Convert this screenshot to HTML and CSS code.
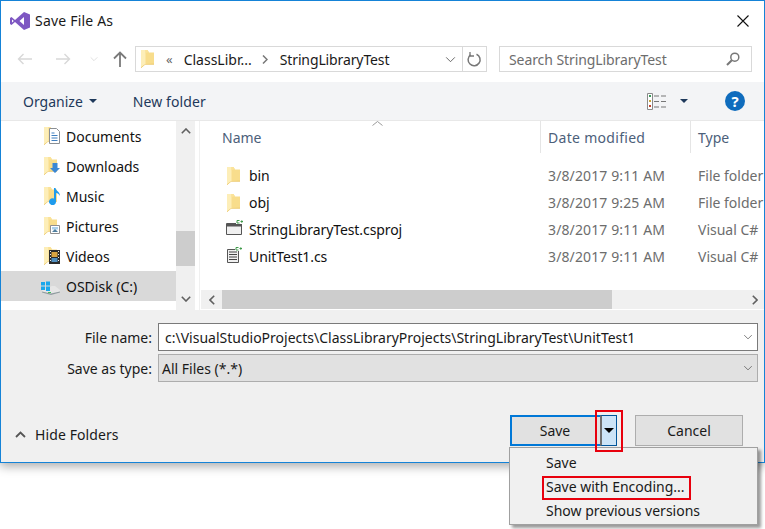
FILE: index.html
```html
<!DOCTYPE html>
<html lang="en">
<head>
    <meta charset="UTF-8">
    <title>Save File As</title>
    <link rel="stylesheet" href="styles.css">
</head>
<body>
    <svg class="defs" width="0" height="0">
        <symbol id="folder" viewBox="0 0 13 18">
            <path d="M0 0h6.500L8 2.500h5V14.500H4L0 18z" fill="#f8dd8c"/>
            <path d="M0 0h4.500v14L0 18z" fill="#fdeeb8"/>
            <path d="M4.500 0h2L8 2.500H6l-1.500 1z" fill="#fbe39a"/>
            <path d="M4.500 14 13 13.700v.8H4.300L0 18v-.8z" fill="#e8c062"/>
        </symbol>
        <symbol id="chev-down" viewBox="0 0 12 8">
            <path d="M1 1.500 6 6.500 11 1.500" fill="none" stroke="currentColor" stroke-width="1"/>
        </symbol>
        <symbol id="cs-badge" viewBox="0 0 7 4">
            <path d="M0 0h7v4H0z" fill="#fff"/>
            <path d="M3.500 .5H1v2.500h2.500M4.500 1.500h2.500M5.800 .3v2.500" fill="none" stroke="#3f9a4a"/>
        </symbol>
    </svg>

    <div class="dialog">
        <div class="titlebar">
            <svg class="vs-logo" width="20" height="18" viewBox="0 0 20 18">
                <path d="M14 0 20 2.500V15.500L14 18 5 10 1.500 13 0 12V6L1.500 5 5 8zM14 5 9.500 9 14 13zM2 7.500V10.500L3.800 9z" fill="#7e57c2"/>
            </svg>
            <span class="title">Save File As</span>
            <svg class="close" width="12" height="12" viewBox="0 0 12 12">
                <path d="M.5.500 11.500 11.500M11.500.500.500 11.500" stroke="#111" stroke-width="1.100"/>
            </svg>
        </div>

        <div class="navbar">
            <svg class="nav-back" width="15" height="12" viewBox="0 0 15 12">
                <path d="M15 6H1.500M6.500 1 1.500 6l5 5" fill="none" stroke="#d8d8d8" stroke-width="1.400"/>
            </svg>
            <svg class="nav-forward" width="15" height="12" viewBox="0 0 15 12">
                <path d="M0 6h13.500M8.500 1l5 5-5 5" fill="none" stroke="#d8d8d8" stroke-width="1.400"/>
            </svg>
            <svg class="nav-recent" width="8" height="6" viewBox="0 0 12 8" color="#d0d0d0"><use href="#chev-down"/></svg>
            <svg class="nav-up" width="14" height="16" viewBox="0 0 14 16">
                <path d="M7 16V2M1 7.500 7 1.500l6 6" fill="none" stroke="#7a7a7a" stroke-width="1.800"/>
            </svg>
            <div class="address">
                <svg class="address-folder" width="13" height="18"><use href="#folder"/></svg>
                <span class="crumb-more">«</span>
                <span class="crumb">ClassLibr...</span>
                <svg class="crumb-sep" width="6" height="9" viewBox="0 0 6 9">
                    <path d="M1 .500 5 4.500 1 8.500" fill="none" stroke="#777" stroke-width="1.500"/>
                </svg>
                <span class="crumb crumb-last">StringLibraryTest</span>
                <svg class="address-drop" width="11" height="7" viewBox="0 0 12 8" color="#555"><use href="#chev-down"/></svg>
                <div class="address-refresh">
                    <svg width="15" height="15" viewBox="0 0 15 15">
                        <path d="M9.500 2.200A6 6 0 1 1 3.500 2.900" fill="none" stroke="#777" stroke-width="1.500"/>
                        <path d="M3 0V4H7" fill="none" stroke="#777" stroke-width="1.300"/>
                    </svg>
                </div>
            </div>
            <div class="search">
                <span>Search StringLibraryTest</span>
                <svg width="14" height="14" viewBox="0 0 14 14">
                    <circle cx="8.800" cy="5.200" r="4" fill="none" stroke="#777" stroke-width="1.500"/>
                    <path d="M5.800 8.200 1 13" stroke="#777" stroke-width="2"/>
                </svg>
            </div>
        </div>

        <div class="toolbar">
            <span class="tool">Organize</span>
            <span class="caret"></span>
            <span class="tool tool-new">New folder</span>
            <svg class="view-icon" width="19" height="17" viewBox="0 0 19 17">
                <path d="M.5.500h5v16h-5z" fill="#fff" stroke="#8a8a8a"/>
                <path d="M2 2h2v2H2z" fill="#3a9a5a"/>
                <path d="M2 7h2v2H2z" fill="#c9a53a"/>
                <path d="M2 12h2v2H2z" fill="#c0402a"/>
                <path d="M7 3h5M14 3h5M7 8.500h5M14 8.500h5M7 14h5M14 14h5" stroke="#777"/>
            </svg>
            <span class="caret caret-view"></span>
            <div class="help">?</div>
        </div>

        <div class="browser">
            <div class="tree">
                <ul class="tree-list">
                    <li class="tree-item">
                        <svg width="16" height="18" viewBox="0 0 16 18">
                            <use href="#folder" width="13" height="18"/>
                            <path d="M5.500 1.500h7l3 3v12h-10z" fill="#fff" stroke="#8a8f94"/>
                            <path d="M7.500 6h3M7.500 8.500h6M7.500 11h6M7.500 13.500h6" stroke="#3f7fbf"/>
                        </svg>
                        <span>Documents</span>
                    </li>
                    <li class="tree-item">
                        <svg width="16" height="18" viewBox="0 0 16 18">
                            <use href="#folder" width="13" height="18"/>
                            <path d="M8.500 6h5v5H16l-5 5-5-5h2.500z" fill="#3a87d4"/>
                        </svg>
                        <span>Downloads</span>
                    </li>
                    <li class="tree-item">
                        <svg width="16" height="18" viewBox="0 0 16 18">
                            <use href="#folder" width="13" height="18"/>
                            <path d="M10 1h1.500c.5 3 4.500 3.500 4.500 8-1-2-2.500-3-4-3v8.500a3.500 3.500 0 1 1-2-3z" fill="#1f9bec"/>
                        </svg>
                        <span>Music</span>
                    </li>
                    <li class="tree-item">
                        <svg width="16" height="18" viewBox="0 0 16 18">
                            <use href="#folder" width="13" height="18"/>
                            <path d="M6.500 8.500h9v8h-9z" fill="#fff" stroke="#8f8f8f"/>
                            <path d="M8 10h6v2.500H8z" fill="#a9d0ea"/>
                            <path d="M8 15l3-3 3 3z" fill="#4f7f9f"/>
                        </svg>
                        <span>Pictures</span>
                    </li>
                    <li class="tree-item">
                        <svg width="16" height="18" viewBox="0 0 16 18">
                            <use href="#folder" width="13" height="18"/>
                            <path d="M5 3h11v14H5z" fill="#2b2b2b"/>
                            <path d="M7.500 5h6v5h-6z" fill="#d9a441"/>
                            <path d="M7.500 11h6v4h-6z" fill="#4f8fc0"/>
                            <path d="M6 4h1v1H6zM6 7h1v1H6zM6 10h1v1H6zM6 13h1v1H6zM14 4h1v1h-1zM14 7h1v1h-1zM14 10h1v1h-1zM14 13h1v1h-1z" fill="#eee"/>
                        </svg>
                        <span>Videos</span>
                    </li>
                    <li class="tree-item tree-drive">
                        <svg width="20" height="18" viewBox="0 0 20 18">
                            <path d="M1 13 11 9h3l5 4v2l-9 3-9-3z" fill="#e6e6e6"/>
                            <path d="M1 14.500l9 2 9-2V15.500L10 18l-9-2.500z" fill="#8f9b9f"/>
                            <path d="M7 15h3v1H7z" fill="#3ec05a"/>
                            <path d="M0 5h4v3.500H0zM5 4.500h4v4H5zM0 9.500h4V13H0zM5 9.500h4V14H5z" fill="#1aa7ec"/>
                        </svg>
                        <span>OSDisk (C:)</span>
                    </li>
                </ul>
                <div class="vscroll">
                    <svg class="arrow-up" width="10" height="6" viewBox="0 0 10 6"><path d="M.8 5.200 5 1l4.200 4.200" fill="none" stroke="#606060" stroke-width="1.600"/></svg>
                    <div class="vthumb"></div>
                    <svg class="arrow-down" width="10" height="6" viewBox="0 0 10 6"><path d="M.8.800 5 5l4.200-4.200" fill="none" stroke="#606060" stroke-width="1.600"/></svg>
                </div>
            </div>

            <div class="files">
                <div class="file-scroll">
                    <div class="file-head">
                        <div class="col col-name">Name
                            <svg class="sort" width="11" height="5" viewBox="0 0 11 5"><path d="M.5 4.500 5.500.5l5 4" fill="none" stroke="#9a9a9a"/></svg>
                        </div>
                        <div class="col col-date">Date modified</div>
                        <div class="col col-type">Type</div>
                    </div>
                    <div class="file-row">
                        <div class="file-name">
                            <div class="file-slot"><svg class="icon-folder" width="13" height="18"><use href="#folder"/></svg></div>
                            <span>bin</span>
                        </div>
                        <div class="file-date">3/8/2017 9:11 AM</div>
                        <div class="file-type">File folder</div>
                    </div>
                    <div class="file-row">
                        <div class="file-name">
                            <div class="file-slot"><svg class="icon-folder" width="13" height="18"><use href="#folder"/></svg></div>
                            <span>obj</span>
                        </div>
                        <div class="file-date">3/8/2017 9:25 AM</div>
                        <div class="file-type">File folder</div>
                    </div>
                    <div class="file-row">
                        <div class="file-name">
                            <div class="file-slot">
                                <svg class="icon-file" width="17" height="16" viewBox="0 0 17 16">
                                    <path d="M.5 3.500h15v11H.5z" fill="#f0f0f0" stroke="#555"/>
                                    <path d="M1 4h14v2.500H1z" fill="#555"/>
                                    <use href="#cs-badge" x="10" y="0" width="7" height="4"/>
                                </svg>
                            </div>
                            <span>StringLibraryTest.csproj</span>
                        </div>
                        <div class="file-date">3/8/2017 9:11 AM</div>
                        <div class="file-type">Visual C#</div>
                    </div>
                    <div class="file-row">
                        <div class="file-name">
                            <div class="file-slot">
                                <svg class="icon-file" width="17" height="16" viewBox="0 0 17 16">
                                    <path d="M1.500 2.500h11v13h-11z" fill="#f0f0f0" stroke="#555"/>
                                    <path d="M3 5h8M3 7.500h8M3 10h8M3 12.500h8" stroke="#444" stroke-width="1.200"/>
                                    <use href="#cs-badge" x="9" y="0" width="7" height="4"/>
                                </svg>
                            </div>
                            <span>UnitTest1.cs</span>
                        </div>
                        <div class="file-date">3/8/2017 9:11 AM</div>
                        <div class="file-type">Visual C#</div>
                    </div>
                </div>
                <div class="hscroll">
                    <div class="hbutton">
                        <svg width="6" height="10" viewBox="0 0 6 10"><path d="M5.200.8 1 5l4.200 4.200" fill="none" stroke="#606060" stroke-width="1.600"/></svg>
                    </div>
                    <div class="hthumb"></div>
                    <svg class="hright" width="6" height="10" viewBox="0 0 6 10"><path d="M.8.8 5 5 .8 9.200" fill="none" stroke="#606060" stroke-width="1.600"/></svg>
                </div>
            </div>
        </div>

        <div class="footer">
            <div class="field">
                <label class="field-label">File name:</label>
                <div class="field-box field-input">
                    <span>c:\VisualStudioProjects\ClassLibraryProjects\StringLibraryTest\UnitTest1</span>
                    <svg width="10" height="6" viewBox="0 0 12 8" color="#555"><use href="#chev-down"/></svg>
                </div>
            </div>
            <div class="field field-type">
                <label class="field-label">Save as type:</label>
                <div class="field-box field-select">
                    <span>All Files (*.*)</span>
                    <svg width="10" height="6" viewBox="0 0 12 8" color="#555"><use href="#chev-down"/></svg>
                </div>
            </div>
            <div class="actions">
                <div class="hide-folders">
                    <svg width="11" height="7" viewBox="0 0 11 7"><path d="M1 6 5.500 1.500 10 6" fill="none" stroke="#555" stroke-width="1.800"/></svg>
                    <span>Hide Folders</span>
                </div>
                <div class="btn-save">
                    <div class="btn-save-main">Save</div>
                    <div class="btn-save-drop"><span class="drop-arrow"></span></div>
                </div>
                <div class="btn-cancel">Cancel</div>
            </div>
        </div>
    </div>

    <!-- popup menu and the red callouts lie over the dialog -->
    <div class="menu">
        <div class="menu-item">Save</div>
        <div class="menu-item">Save with Encoding...</div>
        <div class="menu-item">Show previous versions</div>
    </div>
    <div class="callout callout-arrow"></div>
    <div class="callout callout-item"></div>
</body>
</html>
```

FILE: styles.css
```css
* {
    box-sizing: border-box;
}
html, body {
    margin: 0;
    padding: 0;
}
body {
    position: relative;
    width: 765px;
    height: 529px;
    overflow: hidden;
    background-color: #fff;
    font-family: 'Noto Sans', sans-serif;
    font-size: 14px;
    color: #1a1a1a;
}
.defs {
    position: absolute;
}
.dialog {
    height: 463px;
    border: 1px solid #1583d7;
    background-color: #fff;
    box-shadow: 0 3px 10px rgba(0,0,0,0.35);
    display: flex;
    flex-direction: column;
}

/* title bar */
.titlebar {
    height: 39px;
    flex: none;
    display: flex;
    align-items: center;
    padding: 0 15px 0 9px;
}
.title {
    margin-left: 5px;
    letter-spacing: 0.2px;
}
.close {
    margin-left: auto;
}

/* back / forward / address / search */
.navbar {
    height: 42px;
    flex: none;
    display: flex;
    padding: 6px 12px 10px 16px;
    align-items: center;
}
.nav-forward {
    margin-left: 24px;
}
.nav-recent {
    margin-left: 19px;
}
.nav-up {
    margin-left: 15px;
}
.address {
    width: 352px;
    height: 26px;
    margin-left: 8px;
    border: 1px solid #d9d9d9;
    display: flex;
    align-items: center;
    padding-left: 5px;
}
.crumb-more {
    margin-left: 12px;
    color: #666;
    font-size: 13px;
    line-height: 1;
}
.crumb {
    margin-left: 11px;
}
.crumb-sep {
    margin-left: 10px;
    margin-right: 2px;
}
.crumb-last {
    margin-left: 10px;
    letter-spacing: -0.12px;
}
.address-drop {
    margin-left: auto;
}
.address-refresh {
    width: 24px;
    height: 24px;
    margin-left: 6px;
    border-left: 1px solid #d9d9d9;
    display: flex;
    align-items: center;
    justify-content: center;
}
.search {
    width: 253px;
    height: 26px;
    margin-left: 12px;
    border: 1px solid #d9d9d9;
    display: flex;
    align-items: center;
    justify-content: space-between;
    padding: 0 11px 0 9px;
    color: #6d6d6d;
    letter-spacing: -0.08px;
}

/* organize bar */
.toolbar {
    height: 39px;
    flex: none;
    background-color: #f3f4f6;
    border-bottom: 1px solid #e8e8e8;
    display: flex;
    align-items: center;
    padding: 0 19px 0 22px;
    color: #1e395b;
}
.caret {
    margin-left: 6px;
    border-left: 4px solid transparent;
    border-right: 4px solid transparent;
    border-top: 4px solid #1e395b;
}
.tool-new {
    margin-left: 36px;
    letter-spacing: 0.1px;
}
.view-icon {
    margin-left: auto;
}
.caret-view {
    margin-left: 14px;
}
.help {
    width: 20px;
    height: 20px;
    margin-left: 37px;
    border-radius: 50%;
    background-color: #0f6cbd;
    color: #fff;
    font-weight: 700;
    font-size: 15px;
    line-height: 20px;
    text-align: center;
}

/* tree and file list */
.browser {
    height: 189px;
    flex: none;
    display: flex;
}
.tree {
    width: 194px;
    flex: none;
    display: flex;
}
.tree-list {
    flex: 1;
    margin: 0;
    padding: 0;
    list-style: none;
}
.tree-item {
    height: 30px;
    display: flex;
    align-items: center;
    padding-left: 43px;
    gap: 6px;
    color: #111;
}
.tree-drive {
    background-color: #d9d9d9;
    padding-left: 40px;
    gap: 5px;
}
.vscroll {
    position: relative;
    width: 19px;
    flex: none;
    background-color: #f0f0f0;
    display: flex;
    flex-direction: column;
    align-items: center;
}
.arrow-up {
    margin-top: 7px;
}
.vthumb {
    width: 19px;
    height: 35px;
    margin-top: 97px;
    background-color: #cdcdcd;
}
.arrow-down {
    margin-top: 30px;
}
.files {
    flex: 1;
    min-width: 0;
    margin-left: 4px;
    border-left: 1px solid #f0f0f0;
    display: flex;
    flex-direction: column;
}
.file-scroll {
    flex: 1;
    overflow: hidden;
}
.file-head {
    height: 32px;
    display: flex;
    color: #4c607a;
}
.col {
    position: relative;
    display: flex;
    align-items: center;
    padding-left: 7px;
    border-right: 1px solid #e5e5e5;
}
.col-name {
    width: 341px;
    padding-left: 22px;
}
.col-date {
    width: 150px;
    letter-spacing: 0.3px;
}
.col-type {
    flex: 1;
    border-right: none;
    letter-spacing: 0;
}
.sort {
    position: absolute;
    left: 172px;
    top: 0;
}
.file-row {
    height: 27px;
    display: flex;
    align-items: center;
    color: #6d6d6d;
    white-space: nowrap;
}
.file-head + .file-row {
    margin-top: 9px;
}
.file-name {
    width: 341px;
    flex: none;
    display: flex;
    align-items: center;
    color: #111;
    padding-left: 26px;
    letter-spacing: -0.08px;
}
.file-slot {
    width: 23px;
    flex: none;
    display: flex;
}
.icon-folder {
    margin-left: 1px;
}
.icon-file {
    margin-top: -3px;
}
.file-date {
    width: 150px;
    flex: none;
    padding-left: 7px;
    letter-spacing: 0.12px;
}
.file-type {
    padding-left: 7px;
}
.hscroll {
    height: 19px;
    flex: none;
    margin: 0 0 1px 1px;
    background-color: #f0f0f0;
    display: flex;
    align-items: center;
}
.hbutton {
    width: 21px;
    display: flex;
    justify-content: center;
}
.hthumb {
    width: 390px;
    height: 19px;
    background-color: #cdcdcd;
}
.hright {
    margin-left: auto;
    margin-right: 6px;
}

/* file name, type, buttons */
.footer {
    flex: 1;
    background-color: #f0f0f0;
    padding: 13px 6px 0 0;
}
.field {
    height: 28px;
    display: flex;
    align-items: center;
}
.field-type {
    margin-top: 3px;
}
.field-label {
    width: 151px;
    flex: none;
    text-align: right;
}
.field-box {
    flex: 1;
    height: 28px;
    margin-left: 6px;
    display: flex;
    align-items: center;
    justify-content: space-between;
    padding-right: 4px;
}
.field-input {
    background-color: #fff;
    border: 1px solid #7a7a7a;
    padding-left: 6px;
}
.field-select {
    background-color: #e1e1e1;
    border: 1px solid #adadad;
    padding-left: 3px;
}
.actions {
    display: flex;
    align-items: flex-start;
    margin-top: 33px;
    padding-right: 15px;
}
.hide-folders {
    display: flex;
    align-items: center;
    gap: 9px;
    height: 31px;
    margin-top: 4px;
    padding-left: 14px;
    margin-right: auto;
    letter-spacing: 0.1px;
}
.btn-save {
    width: 107px;
    height: 31px;
    display: flex;
}
.btn-save-main {
    flex: 1;
    border: 2px solid #0078d7;
    border-right: none;
    background-color: #e1e1e1;
    padding-right: 2px;
    text-align: center;
    line-height: 27px;
}
.btn-save-drop {
    width: 17px;
    background-color: #cce4f7;
    border: 1px solid #005499;
    border-left: 2px solid #707070;
    display: flex;
    align-items: center;
    justify-content: center;
}
.drop-arrow {
    border-left: 5px solid transparent;
    border-right: 5px solid transparent;
    border-top: 5px solid #000;
}
.btn-cancel {
    width: 108px;
    height: 31px;
    margin-left: 18px;
    background-color: #e1e1e1;
    border: 1px solid #adadad;
    text-align: center;
    line-height: 29px;
}

/* popup */
.menu {
    position: absolute;
    left: 509px;
    top: 447px;
    width: 249px;
    height: 78px;
    padding-top: 3px;
    background-color: #f0f0f0;
    border: 1px solid #a0a0a0;
    box-shadow: 3px 3px 3px rgba(0,0,0,0.4);
}
.menu-item {
    height: 24px;
    line-height: 24px;
    padding-left: 36px;
}
.callout {
    position: absolute;
    border: 2px solid #e8000d;
}
.callout-arrow {
    left: 595px;
    top: 410px;
    width: 28px;
    height: 42px;
}
.callout-item {
    left: 542px;
    top: 476px;
    width: 149px;
    height: 24px;
}
```
